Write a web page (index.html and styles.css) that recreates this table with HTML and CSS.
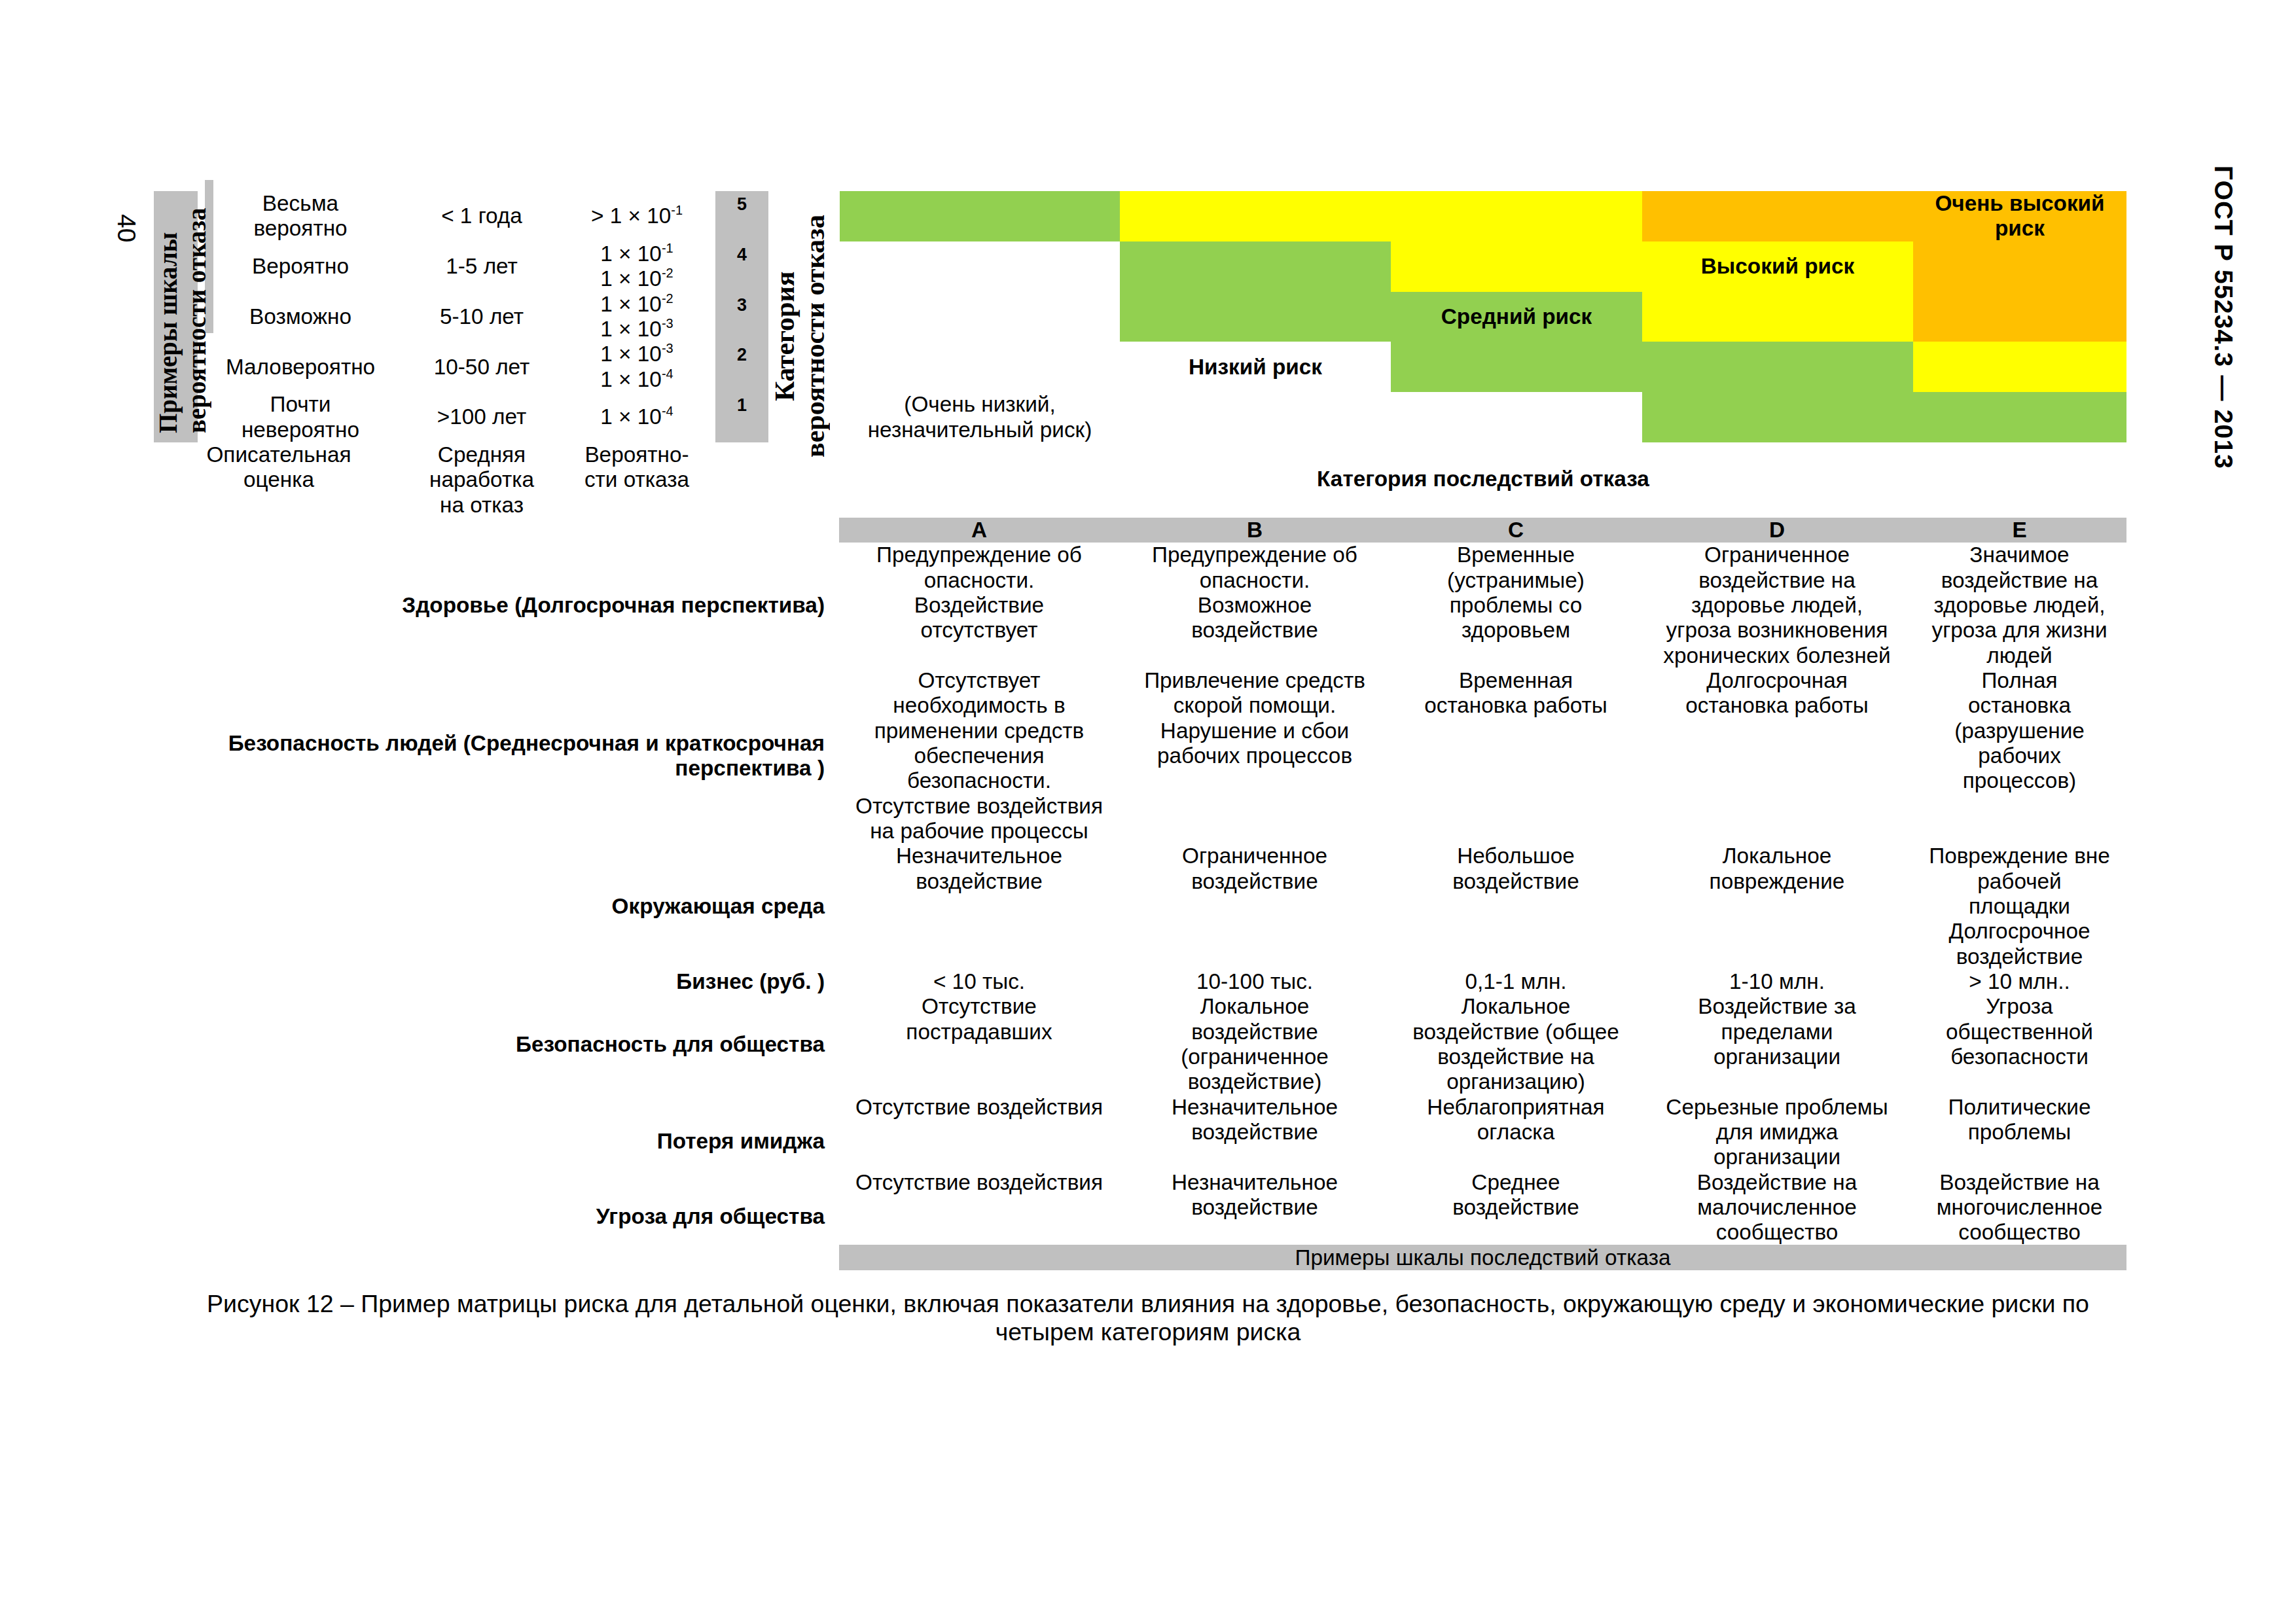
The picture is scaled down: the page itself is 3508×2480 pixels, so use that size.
FILE: index.html
```html
<!DOCTYPE html>
<html lang="ru">
<head>
<meta charset="utf-8">
<title>ГОСТ Р 55234.3 — 2013, с. 40</title>
<link rel="stylesheet" href="styles.css">
</head>
<body>
<div class="page">
  <div class="page-number">40</div>

  <main class="content">
    <section class="top">
      <div class="prob-title">Примеры шкалы<br>вероятности отказа</div>
      <div class="thin-bar"></div>

      <div class="scale">
        <div class="sc"><span>Весьма<br>вероятно</span></div>
        <div class="sc"><span>&lt; 1 года</span></div>
        <div class="sc"><span>&gt; 1 × 10<sup>-1</sup></span></div>

        <div class="sc"><span>Вероятно</span></div>
        <div class="sc"><span>1-5 лет</span></div>
        <div class="sc"><span>1 × 10<sup>-1</sup><br>1 × 10<sup>-2</sup></span></div>

        <div class="sc"><span>Возможно</span></div>
        <div class="sc"><span>5-10 лет</span></div>
        <div class="sc"><span>1 × 10<sup>-2</sup><br>1 × 10<sup>-3</sup></span></div>

        <div class="sc"><span>Маловероятно</span></div>
        <div class="sc"><span>10-50 лет</span></div>
        <div class="sc"><span>1 × 10<sup>-3</sup><br>1 × 10<sup>-4</sup></span></div>

        <div class="sc"><span>Почти<br>невероятно</span></div>
        <div class="sc"><span>&gt;100 лет</span></div>
        <div class="sc"><span>1 × 10<sup>-4</sup></span></div>

        <div class="sc foot foot-desc"><span>Описательная<br>оценка</span></div>
        <div class="sc foot"><span>Средняя<br>наработка<br>на отказ</span></div>
        <div class="sc foot"><span>Вероятно-<br>сти отказа</span></div>
      </div>

      <div class="levels">
        <div class="level">5</div>
        <div class="level">4</div>
        <div class="level">3</div>
        <div class="level">2</div>
        <div class="level">1</div>
      </div>

      <div class="cat-title">Категория<br>вероятности отказа</div>

      <div class="matrix-col">
        <div class="matrix">
          <div class="m green"></div>
          <div class="m yellow"></div>
          <div class="m yellow"></div>
          <div class="m orange"></div>
          <div class="m orange lbl"><span>Очень высокий<br>риск</span></div>

          <div class="m"></div>
          <div class="m green"></div>
          <div class="m yellow"></div>
          <div class="m yellow lbl"><span>Высокий риск</span></div>
          <div class="m orange"></div>

          <div class="m"></div>
          <div class="m green"></div>
          <div class="m green lbl"><span>Средний риск</span></div>
          <div class="m yellow"></div>
          <div class="m orange"></div>

          <div class="m"></div>
          <div class="m lbl"><span>Низкий риск</span></div>
          <div class="m green"></div>
          <div class="m green"></div>
          <div class="m yellow"></div>

          <div class="m"><span>(Очень низкий,<br>незначительный риск)</span></div>
          <div class="m"></div>
          <div class="m"></div>
          <div class="m green"></div>
          <div class="m green"></div>
        </div>
        <div class="cons-title">Категория последствий отказа</div>
      </div>
    </section>

    <section class="cons">
      <div class="row-label"></div>
      <div class="head">A</div>
      <div class="head">B</div>
      <div class="head">C</div>
      <div class="head">D</div>
      <div class="head">E</div>

      <div class="row-label">Здоровье (Долгосрочная перспектива)</div>
      <div class="cell">Предупреждение об<br>опасности.<br>Воздействие<br>отсутствует</div>
      <div class="cell">Предупреждение об<br>опасности.<br>Возможное<br>воздействие</div>
      <div class="cell">Временные<br>(устранимые)<br>проблемы со<br>здоровьем</div>
      <div class="cell">Ограниченное<br>воздействие на<br>здоровье людей,<br>угроза возникновения<br>хронических болезней</div>
      <div class="cell">Значимое<br>воздействие на<br>здоровье людей,<br>угроза для жизни<br>людей</div>

      <div class="row-label">Безопасность людей (Среднесрочная и краткосрочная<br>перспектива )</div>
      <div class="cell">Отсутствует<br>необходимость в<br>применении средств<br>обеспечения<br>безопасности.<br>Отсутствие воздействия<br>на рабочие процессы</div>
      <div class="cell">Привлечение средств<br>скорой помощи.<br>Нарушение и сбои<br>рабочих процессов</div>
      <div class="cell">Временная<br>остановка работы</div>
      <div class="cell">Долгосрочная<br>остановка работы</div>
      <div class="cell">Полная<br>остановка<br>(разрушение<br>рабочих<br>процессов)</div>

      <div class="row-label">Окружающая среда</div>
      <div class="cell">Незначительное<br>воздействие</div>
      <div class="cell">Ограниченное<br>воздействие</div>
      <div class="cell">Небольшое<br>воздействие</div>
      <div class="cell">Локальное<br>повреждение</div>
      <div class="cell">Повреждение вне<br>рабочей<br>площадки<br>Долгосрочное<br>воздействие</div>

      <div class="row-label">Бизнес (руб. )</div>
      <div class="cell">&lt; 10 тыс.</div>
      <div class="cell">10-100 тыс.</div>
      <div class="cell">0,1-1 млн.</div>
      <div class="cell">1-10 млн.</div>
      <div class="cell">&gt; 10 млн..</div>

      <div class="row-label">Безопасность для общества</div>
      <div class="cell">Отсутствие<br>пострадавших</div>
      <div class="cell">Локальное<br>воздействие<br>(ограниченное<br>воздействие)</div>
      <div class="cell">Локальное<br>воздействие (общее<br>воздействие на<br>организацию)</div>
      <div class="cell">Воздействие за<br>пределами<br>организации</div>
      <div class="cell">Угроза<br>общественной<br>безопасности</div>

      <div class="row-label low">Потеря имиджа</div>
      <div class="cell">Отсутствие воздействия</div>
      <div class="cell">Незначительное<br>воздействие</div>
      <div class="cell">Неблагоприятная<br>огласка</div>
      <div class="cell">Серьезные проблемы<br>для имиджа<br>организации</div>
      <div class="cell">Политические<br>проблемы</div>

      <div class="row-label low">Угроза для общества</div>
      <div class="cell">Отсутствие воздействия</div>
      <div class="cell">Незначительное<br>воздействие</div>
      <div class="cell">Среднее<br>воздействие</div>
      <div class="cell">Воздействие на<br>малочисленное<br>сообщество</div>
      <div class="cell">Воздействие на<br>многочисленное<br>сообщество</div>

      <div class="row-label"></div>
      <div class="foot-bar">Примеры шкалы последствий отказа</div>
    </section>

    <p class="caption">Рисунок 12 – Пример матрицы риска для детальной оценки, включая показатели влияния на здоровье, безопасность, окружающую среду и экономические риски по<br>четырем категориям риска</p>
  </main>

  <div class="running-head">ГОСТ Р 55234.3 — 2013</div>
</div>
</body>
</html>
```

FILE: styles.css
```css
html, body {
  margin: 0;
  padding: 0;
  background: #ffffff;
}

body {
  font-family: "Liberation Sans", Arial, sans-serif;
  color: #000000;
}

.page {
  width: 3508px;
  height: 2480px;
  display: flex;
  align-items: flex-start;
  overflow: hidden;
}

/* page furniture (rotated, reads top to bottom) */
.page-number {
  margin: 327px 0 0 178px;
  width: 30px;
  writing-mode: vertical-rl;
  text-orientation: sideways;
  font-size: 39px;
  line-height: 30px;
  white-space: nowrap;
}

.running-head {
  margin: 253px 0 0 134px;
  width: 29px;
  writing-mode: vertical-rl;
  text-orientation: sideways;
  font-size: 39px;
  font-weight: bold;
  letter-spacing: 1.2px;
  line-height: 29px;
  white-space: nowrap;
}

.content {
  margin: 292px 0 0 27px;
  width: 3014px;
  flex: none;
}

/* ---------- upper part ---------- */
.top {
  display: flex;
  align-items: flex-start;
}

.prob-title {
  box-sizing: border-box;
  width: 67px;
  height: 384px;
  flex: none;
  background: #c0c0c0;
  writing-mode: vertical-rl;
  text-orientation: sideways;
  transform: rotate(180deg);
  font-family: "Liberation Serif", "Times New Roman", serif;
  font-weight: bold;
  font-size: 39px;
  line-height: 44px;
  padding-top: 14px;
  white-space: nowrap;
}

.thin-bar {
  width: 13px;
  height: 234px;
  margin: -17px 0 0 11px;
  background: #c0c0c0;
  flex: none;
}

.scale {
  width: 740px;
  flex: none;
  display: grid;
  grid-template-columns: 266px 288px 186px;
  grid-template-rows: repeat(5, 76.8px) auto;
  font-size: 33.33px;
  line-height: 38.33px;
}

.sc {
  display: flex;
  align-items: center;
  justify-content: center;
  text-align: center;
  white-space: nowrap;
}

.sc.foot {
  align-items: flex-start;
}

.sc.foot-desc {
  padding-right: 66px;
}

sup {
  font-size: 0.6em;
  line-height: 0;
  vertical-align: 0.65em;
}

.levels {
  width: 81px;
  height: 384px;
  margin-left: 27px;
  flex: none;
  background: #c0c0c0;
  display: grid;
  grid-template-rows: repeat(5, 1fr);
}

.level {
  text-align: center;
  font-weight: bold;
  font-size: 27px;
  line-height: 40px;
}

.cat-title {
  box-sizing: border-box;
  width: 109px;
  height: 444px;
  flex: none;
  writing-mode: vertical-rl;
  text-orientation: sideways;
  transform: rotate(180deg);
  font-family: "Liberation Serif", "Times New Roman", serif;
  font-weight: bold;
  font-size: 42px;
  line-height: 46px;
  text-align: center;
  padding-right: 2px;
  white-space: nowrap;
}

.matrix-col {
  width: 1966px;
  flex: none;
}

.matrix {
  display: grid;
  grid-template-columns: 428px 414px 384px 414px 326px;
  grid-template-rows: repeat(5, 76.8px);
}

.m {
  display: flex;
  align-items: center;
  justify-content: center;
  text-align: center;
  font-size: 33.33px;
  line-height: 38.33px;
  white-space: nowrap;
}

.m.lbl {
  font-weight: bold;
}

.green  { background: #92d050; }
.yellow { background: #ffff00; }
.orange { background: #ffc000; }

.cons-title {
  margin-top: 37px;
  text-align: center;
  font-weight: bold;
  font-size: 33.33px;
  line-height: 38.33px;
}

/* ---------- consequences table ---------- */
.cons {
  display: grid;
  grid-template-columns: 1047px 428px 414px 384px 414px 327px;
  font-size: 33.33px;
  line-height: 38.33px;
}

.row-label {
  align-self: center;
  padding-right: 22px;
  text-align: right;
  font-weight: bold;
  white-space: nowrap;
}

.row-label.low {
  padding-top: 28px;
}

.head {
  background: #c0c0c0;
  text-align: center;
  font-weight: bold;
}

.cell {
  text-align: center;
  white-space: nowrap;
}

.foot-bar {
  grid-column: 2 / -1;
  background: #c0c0c0;
  text-align: center;
  line-height: 39px;
}

.caption {
  margin: 30px 0 0 0;
  padding-left: 24px;
  text-align: center;
  font-size: 37.5px;
  line-height: 43px;
  white-space: nowrap;
}
```
